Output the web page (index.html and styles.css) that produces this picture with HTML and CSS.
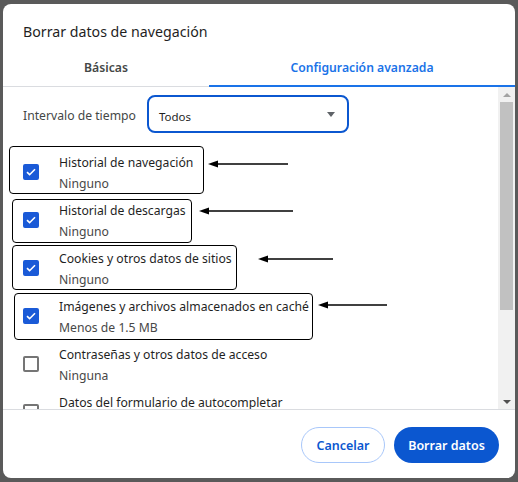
FILE: index.html
```html
<!DOCTYPE html>
<html lang="es">
<head>
<meta charset="utf-8">
<title>Borrar datos de navegación</title>
<link rel="stylesheet" href="styles.css">
</head>
<body>
<div class="backdrop">
  <div class="dialog">
    <h1 class="title">Borrar datos de navegación</h1>
    <div class="tabs">
      <div class="tab tab-basic">Básicas</div>
      <div class="tab tab-adv active">Configuración avanzada</div>
    </div>
    <div class="body">
      <div class="scroll">
        <div class="range">
          <span class="range-label">Intervalo de tiempo</span>
          <div class="select">
            <span class="select-value">Todos</span>
            <svg class="caret" width="8" height="5" viewBox="0 0 8 5"><path d="M0 0h8L4 5z" fill="#5f6368"/></svg>
          </div>
        </div>
        <div class="items">
          <div class="item">
            <span class="cb checked"><svg width="10" height="8" viewBox="0 0 10 8"><path d="M1 4.2l2.6 2.5L9 1.2" fill="none" stroke="#fff" stroke-width="1.6"/></svg></span>
            <div class="texts"><div class="t">Historial de navegación</div><div class="s">Ninguno</div></div>
          </div>
          <div class="item">
            <span class="cb checked"><svg width="10" height="8" viewBox="0 0 10 8"><path d="M1 4.2l2.6 2.5L9 1.2" fill="none" stroke="#fff" stroke-width="1.6"/></svg></span>
            <div class="texts"><div class="t">Historial de descargas</div><div class="s">Ninguno</div></div>
          </div>
          <div class="item">
            <span class="cb checked"><svg width="10" height="8" viewBox="0 0 10 8"><path d="M1 4.2l2.6 2.5L9 1.2" fill="none" stroke="#fff" stroke-width="1.6"/></svg></span>
            <div class="texts"><div class="t">Cookies y otros datos de sitios</div><div class="s">Ninguno</div></div>
          </div>
          <div class="item">
            <span class="cb checked"><svg width="10" height="8" viewBox="0 0 10 8"><path d="M1 4.2l2.6 2.5L9 1.2" fill="none" stroke="#fff" stroke-width="1.6"/></svg></span>
            <div class="texts"><div class="t">Imágenes y archivos almacenados en caché</div><div class="s">Menos de 1.5 MB</div></div>
          </div>
          <div class="item">
            <span class="cb"></span>
            <div class="texts"><div class="t">Contraseñas y otros datos de acceso</div><div class="s">Ninguna</div></div>
          </div>
          <div class="item">
            <span class="cb"></span>
            <div class="texts"><div class="t">Datos del formulario de autocompletar</div><div class="s">Ninguno</div></div>
          </div>
        </div>
      </div>
      <div class="scrollbar">
        <svg class="sb-arrow" width="8" height="4" viewBox="0 0 8 4"><path d="M0 4h8L4 0z" fill="#a3a3a3"/></svg>
        <div class="sb-track"><div class="sb-thumb"></div></div>
        <svg class="sb-arrow" width="8" height="4" viewBox="0 0 8 4"><path d="M0 0h8L4 4z" fill="#505050"/></svg>
      </div>
    </div>
    <div class="footer">
      <button class="btn btn-cancel">Cancelar</button>
      <button class="btn btn-primary">Borrar datos</button>
    </div>
  </div>

  <div class="mark box1"></div>
  <div class="mark box2"></div>
  <div class="mark box3"></div>
  <div class="mark box4"></div>
  <svg class="arrows" width="518" height="482" viewBox="0 0 518 482">
    <g stroke="#000" stroke-width="1.3" fill="#000">
      <line x1="288" y1="164" x2="214" y2="164"/>
      <path d="M208 164l10-3.5v7z" stroke="none"/>
      <line x1="293" y1="211" x2="205" y2="211"/>
      <path d="M199 211l10-3.5v7z" stroke="none"/>
      <line x1="333" y1="259" x2="264" y2="259"/>
      <path d="M258 259l10-3.5v7z" stroke="none"/>
      <line x1="387" y1="305" x2="324" y2="305"/>
      <path d="M318 305l10-3.5v7z" stroke="none"/>
    </g>
  </svg>
</div>
</body>
</html>
```

FILE: styles.css
```css
* { box-sizing: border-box; }
html, body { margin: 0; padding: 0; }
body {
  width: 518px;
  height: 482px;
  overflow: hidden;
  background: #5a5a5a;
  font-family: "Noto Sans", "Open Sans", sans-serif;
}
.backdrop {
  position: relative;
  width: 518px;
  height: 482px;
  padding: 4px 3px 4px 3px;
}
.dialog {
  width: 512px;
  height: 474px;
  background: #fff;
  border-radius: 8px;
  display: flex;
  flex-direction: column;
  overflow: hidden;
}
.title {
  margin: 0;
  padding: 18px 0 0 20px;
  height: 46px;
  font-size: 14.2px;
  font-weight: 400;
  color: #1f1f1f;
  line-height: 20px;
}
.tabs {
  display: flex;
  height: 37px;
  border-bottom: 1px solid #dadce0;
}
.tab {
  display: flex;
  align-items: center;
  justify-content: center;
  font-size: 12.2px;
  font-weight: 600;
  color: #444746;
  padding-bottom: 1px;
}
.tab-basic { width: 206px; }
.tab-adv { width: 306px; }
.tab.active {
  color: #1a73e8;
  border-bottom: 2px solid #1a73e8;
  margin-bottom: -1px;
}
.body {
  display: flex;
  height: 323px;
  border-bottom: 1px solid #dadce0;
}
.scroll {
  flex: 1;
  overflow: hidden;
  padding-left: 20px;
}
.range {
  display: flex;
  align-items: center;
  height: 48px;
  margin-top: 3px;
}
.range-label {
  font-size: 12.2px;
  color: #444746;
  width: 124px;
  margin-top: 3px;
}
.select {
  width: 202px;
  height: 38px;
  border: 2px solid #0b57d0;
  border-radius: 8px;
  display: flex;
  align-items: center;
  justify-content: space-between;
  padding: 0 12px 0 10px;
  font-size: 11.5px;
  color: #1f1f1f;
}
.select-value { margin-top: 5px; }
.caret { margin-top: 1px; }
.items { margin-top: 10px; }
.item {
  display: flex;
  align-items: center;
  height: 48px;
}
.cb {
  width: 16px;
  height: 16px;
  border: 2px solid #757575;
  border-radius: 2px;
  flex: none;
  display: flex;
  align-items: center;
  justify-content: center;
}
.cb.checked {
  background: #1a5ad7;
  border-color: #1a5ad7;
}
.texts {
  margin-left: 20px;
  font-size: 12.2px;
  line-height: 21px;
  margin-top: 1px;
}
.t { color: #1f1f1f; }
.s { color: #474747; }
.scrollbar {
  width: 17px;
  background: #f1f1f1;
  display: flex;
  flex-direction: column;
  align-items: center;
}
.sb-arrow { flex: none; margin: 6px 0 5px; }
.sb-track {
  flex: 1;
  width: 100%;
  padding: 0 2px;
}
.sb-thumb {
  height: 208px;
  background: #c1c1c1;
}
.footer {
  flex: 1;
  display: flex;
  justify-content: flex-end;
  align-items: flex-start;
  gap: 9px;
  padding: 17px 16px 0 0;
}
.btn {
  height: 36px;
  border-radius: 18px;
  font-family: inherit;
  font-size: 12.5px;
  font-weight: 600;
  padding: 0;
  white-space: nowrap;
  cursor: pointer;
}
.btn-cancel {
  width: 84px;
  background: #fff;
  color: #0b57d0;
  border: 1px solid #a8c7fa;
}
.btn-primary {
  width: 105px;
  background: #0b57d0;
  color: #fff;
  border: none;
}
.mark {
  position: absolute;
  border: 1.3px solid #000;
  border-radius: 4px;
}
.box1 { left: 9px; top: 146px; width: 195px; height: 48px; }
.box2 { left: 12px; top: 199px; width: 180px; height: 44px; }
.box3 { left: 12px; top: 245px; width: 225px; height: 45px; }
.box4 { left: 14px; top: 293px; width: 299px; height: 47px; }
.arrows {
  position: absolute;
  left: 0;
  top: 0;
  pointer-events: none;
}
```
